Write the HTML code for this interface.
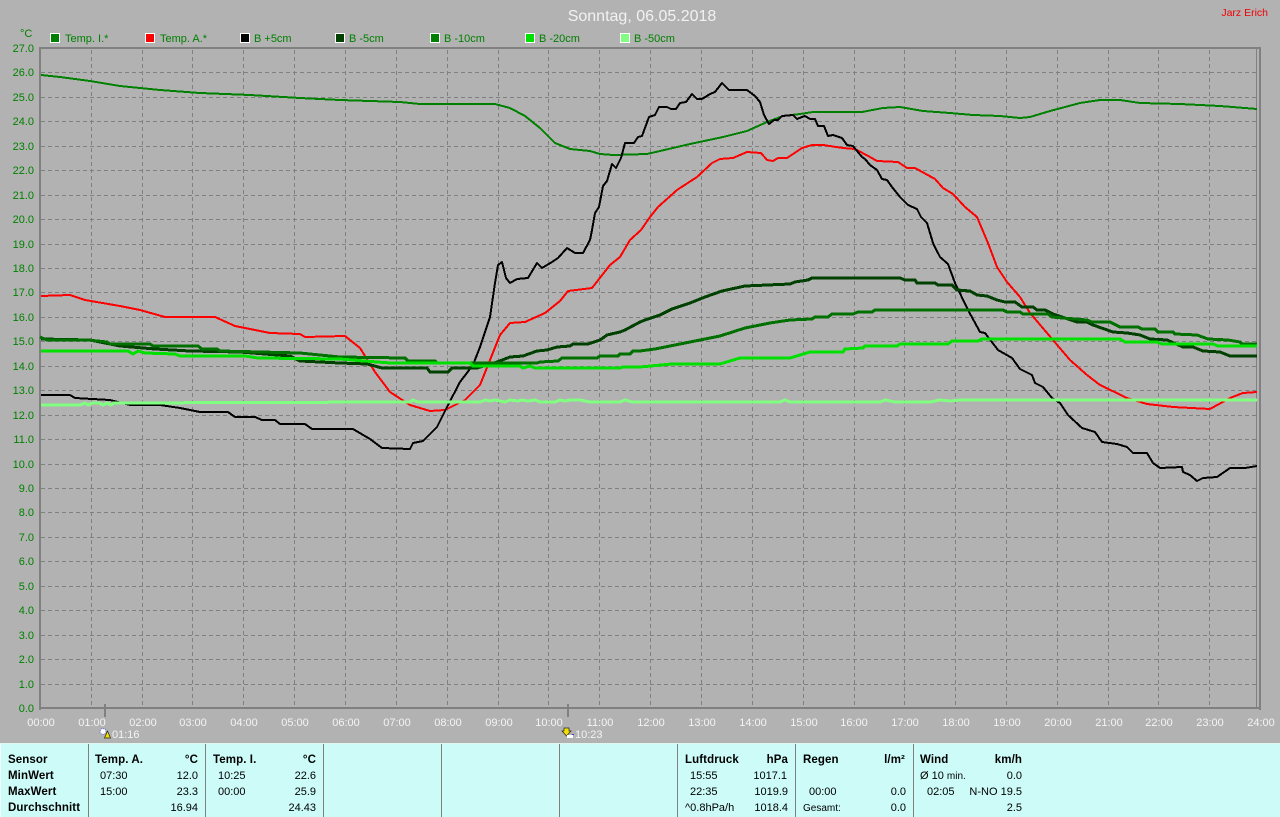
<!DOCTYPE html>
<html><head><meta charset="utf-8"><title>Sonntag, 06.05.2018</title>
<style>
html,body{margin:0;padding:0;background:#b2b2b2;width:1280px;height:817px;overflow:hidden}
svg{display:block;font-family:"Liberation Sans",sans-serif}
.c{fill:none;stroke-width:2;stroke-linejoin:round;shape-rendering:crispEdges}
.g{fill:#008000;font-size:11px}
.y{fill:#008000;font-size:11px;text-anchor:end}
.h{fill:#f4f4f4;font-size:11px;text-anchor:middle}
.t{fill:#000;font-size:11px}
.b{fill:#000;font-size:11.5px;font-weight:bold;letter-spacing:.1px}
.e{text-anchor:end}
</style></head><body>
<svg width="1280" height="817" viewBox="0 0 1280 817" xmlns="http://www.w3.org/2000/svg">
<rect width="1280" height="817" fill="#b2b2b2"/>

<text x="642" y="21" fill="#f2f2f2" font-size="16" text-anchor="middle">Sonntag, 06.05.2018</text>
<text x="1268" y="16" fill="#f00000" font-size="10.500" text-anchor="end">Jarz Erich</text>
<text x="20" y="37" class="g">°C</text>

<g stroke="#fff" stroke-width="1" shape-rendering="crispEdges">
<rect x="50.5" y="33.5" width="9" height="9" fill="#008000"/>
<rect x="145.5" y="33.5" width="9" height="9" fill="#ff0000"/>
<rect x="240.5" y="33.5" width="9" height="9" fill="#000"/>
<rect x="335.5" y="33.5" width="9" height="9" fill="#004000"/>
<rect x="430.5" y="33.5" width="9" height="9" fill="#008000"/>
<rect x="525.5" y="33.5" width="9" height="9" fill="#00e000"/>
<rect x="620.5" y="33.5" width="9" height="9" fill="#80ff80"/>
</g>
<text x="65" y="42" class="g">Temp. I.*</text>
<text x="160" y="42" class="g">Temp. A.*</text>
<text x="254" y="42" class="g">B +5cm</text>
<text x="349" y="42" class="g">B -5cm</text>
<text x="444" y="42" class="g">B -10cm</text>
<text x="539" y="42" class="g">B -20cm</text>
<text x="634" y="42" class="g">B -50cm</text>

<path fill="none" stroke="#808080" stroke-width="1" stroke-dasharray="4 3" shape-rendering="crispEdges" d="M41 72.5H1257M41 97.5H1257M41 121.5H1257M41 146.5H1257M41 170.5H1257M41 195.5H1257M41 219.5H1257M41 244.5H1257M41 268.5H1257M41 292.5H1257M41 317.5H1257M41 341.5H1257M41 366.5H1257M41 390.5H1257M41 415.5H1257M41 439.5H1257M41 464.5H1257M41 488.5H1257M41 512.5H1257M41 537.5H1257M41 561.5H1257M41 586.5H1257M41 610.5H1257M41 635.5H1257M41 659.5H1257M41 684.5H1257"/>
<path fill="none" stroke="#808080" stroke-width="1" stroke-dasharray="4 3" shape-rendering="crispEdges" d="M91.5 50V707M142.5 50V707M192.5 50V707M243.5 50V707M294.5 50V707M345.5 50V707M396.5 50V707M447.5 50V707M498.5 50V707M548.5 50V707M599.5 50V707M650.5 50V707M701.5 50V707M752.5 50V707M803.5 50V707M854.5 50V707M904.5 50V707M955.5 50V707M1006.5 50V707M1057.5 50V707M1108.5 50V707M1158.5 50V707M1209.5 50V707"/>

<g fill="#808080" shape-rendering="crispEdges">
<rect x="39" y="47" width="1222" height="2"/>
<rect x="39" y="47" width="2" height="663"/>
<rect x="39" y="707" width="1222" height="2"/>
<rect x="1259" y="47" width="2" height="663"/>
<rect x="1256" y="49" width="1" height="659"/>
<rect x="104" y="704" width="2" height="13"/>
<rect x="567" y="704" width="2" height="13"/>
</g>

<polyline class="c" stroke="#008000" points="41,75 60,77 90,81 120,86 160,90 200,93 250,95 300,98 340,100 400,102 420,104 495,104 510,108 525,116 540,128 555,143 570,149 590,151 600,154 613,155 647,154 660,151 690,144 723,137 747,131 767,122 783,116 800,114 813,112 862,112 883,108 900,107 923,111 950,113 973,115 1000,116 1020,118 1030,117 1050,111 1080,103 1100,100 1120,100 1140,103 1180,104 1220,106 1257,109"/>
<polyline class="c" stroke="#ff0000" points="41,296 70,295 85,300 120,306 140,310 165,317 215,317 235,326 270,333 300,334 305,337 345,336 360,348 375,372 390,392 410,405 430,411 445,410 465,400 480,385 490,360 500,335 510,323 525,322 545,313 560,301 568,291 592,288 610,265 620,257 630,240 641,230 650,217 658,207 677,190 697,177 712,163 720,159 733,158 747,152 761,153 767,160 773,161 778,158 787,158 802,148 812,145 823,145 843,148 855,149 870,157 877,161 898,162 907,168 915,168 935,179 943,188 953,194 965,207 977,217 988,243 997,267 1007,282 1020,297 1030,313 1053,340 1070,360 1087,375 1100,385 1127,398 1147,404 1173,407 1210,409 1230,398 1243,393 1257,392"/>
<polyline class="c" stroke="#000" points="41,395 70,395 75,398 110,400 130,405 160,405 180,408 200,412 228,412 235,417 255,417 262,420 275,420 280,424 305,424 312,429 353,429 370,439 382,448 410,449 413,443 423,441 437,427 447,407 460,382 473,365 480,347 490,317 495,283 498,265 502,262 506,278 510,283 517,279 528,278 537,263 542,268 552,262 558,258 567,248 575,253 583,253 590,240 592,230 595,213 599,207 603,186 607,181 612,164 616,168 621,158 625,143 634,143 638,137 642,136 649,117 655,115 659,107 667,107 671,109 676,109 680,103 686,102 692,94 697,99 702,99 710,94 715,92 722,83 729,90 747,90 755,96 760,102 764,115 769,124 774,120 778,120 782,116 793,115 797,119 802,117 805,116 810,119 815,119 818,126 824,126 828,136 833,135 842,138 847,145 853,146 862,157 865,159 870,165 877,170 882,179 887,180 892,187 900,197 908,205 917,209 921,217 927,223 933,243 940,257 948,264 955,283 968,310 980,332 985,333 998,350 1012,358 1020,369 1032,375 1035,383 1043,387 1052,398 1060,403 1068,415 1082,428 1095,432 1102,442 1117,444 1127,447 1133,453 1147,453 1153,463 1160,468 1182,467 1183,472 1190,475 1197,481 1203,478 1217,477 1230,468 1245,468 1257,466"/>
<polyline class="c" stroke="#004000" style="stroke-width:3" points="41,339 90,340 120,346 155,349 190,351 240,352 290,356 300,361 340,363 367,364 382,368 427,368 430,372 448,372 452,368 477,368 497,362 510,357 523,356 537,351 547,350 557,347 570,346 573,344 588,344 600,340 607,335 620,332 625,330 640,322 645,320 660,315 672,309 690,303 705,297 722,291 745,286 790,284 795,282 808,280 812,278 900,278 905,280 915,280 917,283 935,283 938,285 952,285 957,290 970,291 977,295 987,296 997,300 1005,302 1015,302 1022,307 1033,307 1037,310 1045,310 1053,314 1077,322 1087,322 1093,325 1113,332 1127,333 1140,335 1150,339 1167,340 1183,347 1193,347 1203,351 1220,352 1230,356 1257,356"/>
<polyline class="c" stroke="#007000" style="stroke-width:3" points="40,337 47,340 88,340 107,342 110,344 150,344 153,346 198,346 202,349 217,349 220,351 260,352 300,353 340,357 405,358 408,361 435,361 437,363 537,363 540,362 558,361 562,358 597,358 600,356 618,356 620,354 630,354 633,351 640,351 655,349 680,344 700,340 720,336 745,328 770,323 790,320 812,319 815,317 828,317 832,314 853,314 858,312 872,312 875,310 1003,310 1007,312 1020,312 1023,314 1048,314 1052,317 1063,318 1087,320 1092,322 1110,322 1120,327 1138,327 1142,329 1155,329 1158,332 1173,332 1175,334 1197,335 1208,339 1228,340 1240,342 1242,344 1257,344"/>
<polyline class="c" stroke="#00e000" style="stroke-width:3" points="41,351 128,351 133,354 138,351 145,353 175,354 180,356 245,356 258,358 340,359 352,360 390,363 470,363 473,366 520,366 523,368 530,366 535,368 620,368 623,367 640,367 672,364 720,364 730,361 740,358 790,358 810,352 843,352 845,349 863,348 865,346 897,346 900,344 948,344 952,341 978,341 982,339 1120,339 1125,342 1157,342 1162,344 1213,344 1218,346 1257,346"/>
<polyline class="c" stroke="#80ff80" style="stroke-width:3" points="41,405 80,405 85,403 88,405 92,403 95,403 99,403 103,405 107,403 111,405 114,403 400,402 410,402 413,400 418,402 480,402 485,400 490,401 495,400 505,402 510,400 518,401 522,400 528,401 535,400 540,402 555,402 560,400 565,401 570,400 580,400 590,402 620,402 625,400 632,402 650,402 660,402 780,402 785,400 790,402 880,402 885,400 895,402 930,402 940,400 950,401 960,400 1000,400 1257,400"/>

<text x="34" y="52" class="y">27.0</text><text x="34" y="76" class="y">26.0</text><text x="34" y="101" class="y">25.0</text><text x="34" y="125" class="y">24.0</text><text x="34" y="150" class="y">23.0</text><text x="34" y="174" class="y">22.0</text><text x="34" y="199" class="y">21.0</text><text x="34" y="223" class="y">20.0</text><text x="34" y="248" class="y">19.0</text><text x="34" y="272" class="y">18.0</text><text x="34" y="296" class="y">17.0</text><text x="34" y="321" class="y">16.0</text><text x="34" y="345" class="y">15.0</text><text x="34" y="370" class="y">14.0</text><text x="34" y="394" class="y">13.0</text><text x="34" y="419" class="y">12.0</text><text x="34" y="443" class="y">11.0</text><text x="34" y="468" class="y">10.0</text><text x="34" y="492" class="y">9.0</text><text x="34" y="516" class="y">8.0</text><text x="34" y="541" class="y">7.0</text><text x="34" y="565" class="y">6.0</text><text x="34" y="590" class="y">5.0</text><text x="34" y="614" class="y">4.0</text><text x="34" y="639" class="y">3.0</text><text x="34" y="663" class="y">2.0</text><text x="34" y="688" class="y">1.0</text><text x="34" y="712" class="y">0.0</text>

<text x="41" y="726" class="h">00:00</text><text x="92" y="726" class="h">01:00</text><text x="143" y="726" class="h">02:00</text><text x="193" y="726" class="h">03:00</text><text x="244" y="726" class="h">04:00</text><text x="295" y="726" class="h">05:00</text><text x="346" y="726" class="h">06:00</text><text x="397" y="726" class="h">07:00</text><text x="448" y="726" class="h">08:00</text><text x="499" y="726" class="h">09:00</text><text x="549" y="726" class="h">10:00</text><text x="600" y="726" class="h">11:00</text><text x="651" y="726" class="h">12:00</text><text x="702" y="726" class="h">13:00</text><text x="753" y="726" class="h">14:00</text><text x="804" y="726" class="h">15:00</text><text x="854" y="726" class="h">16:00</text><text x="905" y="726" class="h">17:00</text><text x="956" y="726" class="h">18:00</text><text x="1007" y="726" class="h">19:00</text><text x="1058" y="726" class="h">20:00</text><text x="1109" y="726" class="h">21:00</text><text x="1159" y="726" class="h">22:00</text><text x="1210" y="726" class="h">23:00</text><text x="1261" y="726" class="h">24:00</text>
<text x="112" y="738" fill="#f4f4f4" font-size="11">01:16</text>
<text x="575" y="738" fill="#f4f4f4" font-size="11">10:23</text>

<circle cx="103" cy="731.500" r="3" fill="#fff" stroke="#5a5ac8" stroke-width="1" stroke-dasharray="1 1"/>
<path d="M107.500 731L104.500 738H110.500Z" fill="#f4e000" stroke="#222" stroke-width=".7"/>
<path d="M564 728H569V731H571L566.500 736 562 731H564Z" fill="#f4e000" stroke="#222" stroke-width=".7"/>
<rect x="567" y="735" width="6" height="3" fill="#fff"/>
<rect x="572" y="734" width="2" height="1" fill="#3c3cc8"/>

<rect x="0" y="744" width="1280" height="73" fill="#ccfbf8"/>
<rect x="0" y="743" width="1280" height="1" fill="#e0f4f2"/>
<rect x="0" y="744" width="1" height="73" fill="#f0ffff"/>
<g fill="#808080" shape-rendering="crispEdges">
<rect x="88" y="744" width="1" height="73"/><rect x="205" y="744" width="1" height="73"/><rect x="323" y="744" width="1" height="73"/><rect x="441" y="744" width="1" height="73"/><rect x="559" y="744" width="1" height="73"/><rect x="677" y="744" width="1" height="73"/><rect x="795" y="744" width="1" height="73"/><rect x="913" y="744" width="1" height="73"/>
</g>

<text x="8" y="763" class="b">Sensor</text>
<text x="8" y="779" class="b">MinWert</text>
<text x="8" y="795" class="b">MaxWert</text>
<text x="8" y="811" class="b">Durchschnitt</text>

<text x="95" y="763" class="b">Temp. A.</text><text x="198" y="763" class="b e">°C</text>
<text x="100" y="779" class="t">07:30</text><text x="198" y="779" class="t e">12.0</text>
<text x="100" y="795" class="t">15:00</text><text x="198" y="795" class="t e">23.3</text>
<text x="198" y="811" class="t e">16.94</text>

<text x="213" y="763" class="b">Temp. I.</text><text x="316" y="763" class="b e">°C</text>
<text x="218" y="779" class="t">10:25</text><text x="316" y="779" class="t e">22.6</text>
<text x="218" y="795" class="t">00:00</text><text x="316" y="795" class="t e">25.9</text>
<text x="316" y="811" class="t e">24.43</text>

<text x="685" y="763" class="b">Luftdruck</text><text x="788" y="763" class="b e">hPa</text>
<text x="690" y="779" class="t">15:55</text><text x="787" y="779" class="t e">1017.1</text>
<text x="690" y="795" class="t">22:35</text><text x="788" y="795" class="t e">1019.9</text>
<text x="685" y="811" class="t">^0.8hPa/h</text><text x="788" y="811" class="t e">1018.4</text>

<text x="803" y="763" class="b">Regen</text><text x="905" y="763" class="b e">l/m²</text>
<text x="809" y="795" class="t">00:00</text><text x="906" y="795" class="t e">0.0</text>
<text x="803" y="811" class="t" style="font-size:10px">Gesamt:</text><text x="906" y="811" class="t e">0.0</text>

<text x="920" y="763" class="b">Wind</text><text x="1022" y="763" class="b e">km/h</text>
<text x="920" y="779" class="t">Ø 10 <tspan font-size="10">min.</tspan></text><text x="1022" y="779" class="t e">0.0</text>
<text x="927" y="795" class="t">02:05</text><text x="1022" y="795" class="t e">N-NO 19.5</text>
<text x="1022" y="811" class="t e">2.5</text>
</svg>
</body></html>
